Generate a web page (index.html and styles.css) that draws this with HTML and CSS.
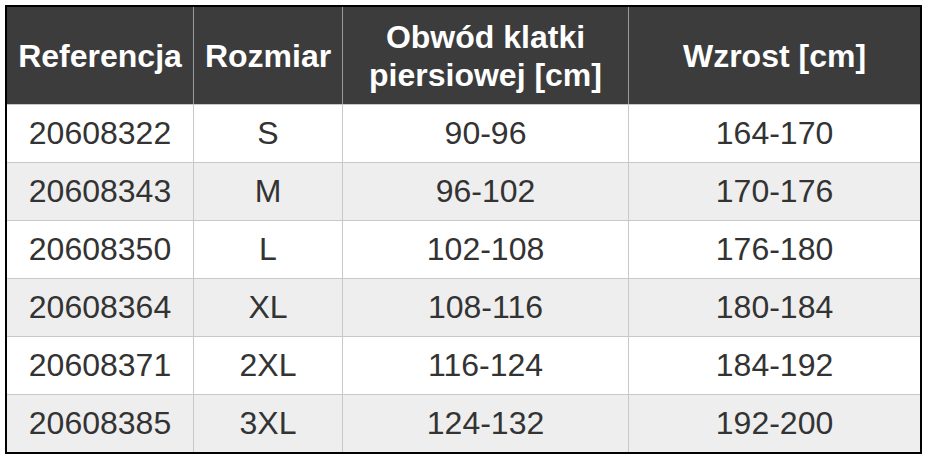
FILE: index.html
```html
<!DOCTYPE html>
<html lang="pl">
<head>
<meta charset="utf-8">
<link rel="stylesheet" href="styles.css">
</head>
<body>
<div class="table">
  <div class="th">Referencja</div>
  <div class="th sep">Rozmiar</div>
  <div class="th sep">Obwód klatki<br>piersiowej [cm]</div>
  <div class="th sep">Wzrost [cm]</div>

  <div class="td">20608322</div><div class="td sep">S</div><div class="td sep">90-96</div><div class="td sep">164-170</div>
  <div class="td alt">20608343</div><div class="td sep alt">M</div><div class="td sep alt">96-102</div><div class="td sep alt">170-176</div>
  <div class="td">20608350</div><div class="td sep">L</div><div class="td sep">102-108</div><div class="td sep">176-180</div>
  <div class="td alt">20608364</div><div class="td sep alt">XL</div><div class="td sep alt">108-116</div><div class="td sep alt">180-184</div>
  <div class="td">20608371</div><div class="td sep">2XL</div><div class="td sep">116-124</div><div class="td sep">184-192</div>
  <div class="td alt">20608385</div><div class="td sep alt">3XL</div><div class="td sep alt">124-132</div><div class="td sep alt">192-200</div>
</div>
</body>
</html>
```
FILE: styles.css
```css
html, body {
  margin: 0;
  padding: 0;
  background: #ffffff;
}
body {
  padding: 5px;
  font-family: "Liberation Sans", Arial, sans-serif;
}
.table {
  display: grid;
  grid-template-columns: 186px 149px 286px 292px;
  width: max-content;
  border: 2px solid #000000;
}
.th, .td {
  box-sizing: border-box;
  display: flex;
  align-items: center;
  justify-content: center;
  text-align: center;
  font-size: 32px;
}
.th {
  height: 97px;
  background: #3c3c3c;
  color: #ffffff;
  font-weight: bold;
  line-height: 38px;
}
.th.sep {
  border-left: 1px solid #9a9a9a;
}
.td {
  height: 58px;
  background: #ffffff;
  color: #333333;
  border-top: 1px solid #c8c8c8;
}
.td.sep {
  border-left: 1px solid #c8c8c8;
}
.td.alt {
  background: #eeeeee;
}
```
